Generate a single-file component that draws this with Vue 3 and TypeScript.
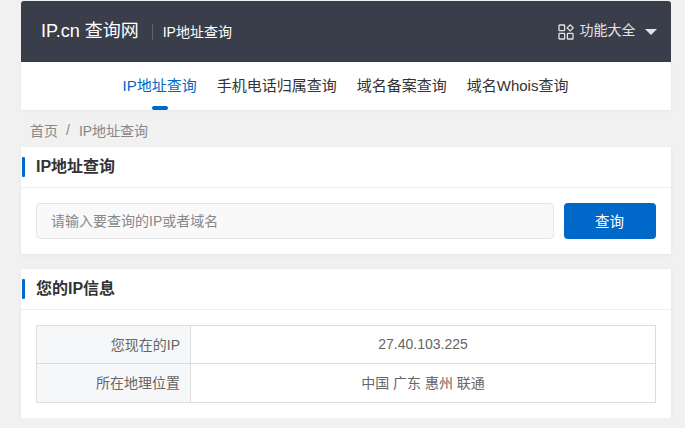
<script setup lang="ts">
const navItems = ['IP地址查询', '手机电话归属查询', '域名备案查询', '域名Whois查询']
const rows = [
  { label: '您现在的IP', value: '27.40.103.225' },
  { label: '所在地理位置', value: '中国 广东 惠州 联通' },
]
</script>

<template>
  <div class="page">
    <header class="topbar">
      <div class="brand">
        <span class="logo">IP.cn 查询网</span>
        <span class="sub">IP地址查询</span>
      </div>
      <div class="tools">
        <svg class="grid-icon" width="16" height="16" viewBox="0 0 16 16" fill="none" stroke="#e4e4e6" stroke-width="1.3">
          <rect x="1" y="1" width="5.6" height="5.6" rx="0.6" />
          <rect x="9.4" y="9.4" width="5.6" height="5.6" rx="0.6" />
          <rect x="1" y="9.4" width="5.6" height="5.6" rx="0.6" />
          <path d="M12.2 0.9l3 3-3 3-3-3z" />
        </svg>
        <span class="tools-text">功能大全</span>
        <span class="caret"></span>
      </div>
    </header>

    <nav class="nav">
      <a v-for="(item, i) in navItems" :key="item" class="nav-item" :class="{ active: i === 0 }">{{ item }}</a>
    </nav>

    <div class="crumbs">
      <span>首页</span>
      <span class="sep">/</span>
      <span>IP地址查询</span>
    </div>

    <section class="card search-card">
      <h2 class="card-title">IP地址查询</h2>
      <div class="search-row">
        <input class="search-input" type="text" placeholder="请输入要查询的IP或者域名" />
        <button class="search-btn" type="button">查询</button>
      </div>
    </section>

    <section class="card info-card">
      <h2 class="card-title">您的IP信息</h2>
      <div class="table-wrap">
        <table class="info-table">
          <tbody>
            <tr v-for="row in rows" :key="row.label">
              <th>{{ row.label }}</th>
              <td>{{ row.value }}</td>
            </tr>
          </tbody>
        </table>
      </div>
    </section>
  </div>
</template>

<style>
html, body {
  margin: 0;
  background: #f1f1f1;
}
</style>

<style scoped>
.page {
  box-sizing: border-box;
  width: 650px;
  margin-left: 21px;
  padding-top: 1px;
  font-family: "Liberation Sans", "Noto Sans CJK SC", sans-serif;
  color: #333;
}
.topbar {
  height: 61px;
  background: #3a3d4a;
  border-radius: 3px 3px 0 0;
  display: flex;
  align-items: center;
  justify-content: space-between;
  padding: 0 14px 0 20px;
  color: #fff;
}
.brand {
  display: flex;
  align-items: center;
}
.logo {
  font-size: 18px;
  line-height: 22px;
  padding-bottom: 2px;
}
.sub {
  font-size: 14px;
  margin-left: 13px;
  padding-left: 10px;
  border-left: 1px solid #5f626d;
  line-height: 16px;
}
.tools {
  display: flex;
  align-items: center;
  color: #e4e4e6;
  font-size: 14px;
}
.tools-text {
  margin-left: 5.5px;
  line-height: 18px;
  padding-bottom: 3px;
}
.caret {
  margin-left: 9.5px;
  width: 0;
  height: 0;
  border-left: 6px solid transparent;
  border-right: 6px solid transparent;
  border-top: 6px solid #e4e4e6;
}
.nav {
  height: 48px;
  box-sizing: border-box;
  padding-right: 1px;
  background: #fff;
  display: flex;
  justify-content: center;
  gap: 20px;
  box-shadow: 0 1px 3px rgba(0, 0, 0, 0.04);
}
.nav-item {
  position: relative;
  font-size: 15px;
  line-height: 47px;
  color: #333;
}
.nav-item.active {
  color: #0068c9;
}
.nav-item.active::after {
  content: "";
  position: absolute;
  left: 50%;
  bottom: 0;
  width: 16px;
  height: 4px;
  margin-left: -8px;
  border-radius: 2px;
  background: #0068c9;
}
.crumbs {
  height: 37px;
  display: flex;
  align-items: center;
  padding: 2px 0 0 9px;
  box-sizing: border-box;
  font-size: 14px;
  color: #888;
}
.sep {
  margin: 0 9px 0 8px;
}
.card {
  background: #fff;
  box-shadow: 0 1px 4px rgba(0, 0, 0, 0.05);
}
.search-card {
  height: 107px;
  margin-bottom: 15px;
}
.info-card {
  height: 149px;
}
.card-title {
  position: relative;
  margin: 0;
  height: 41px;
  box-sizing: border-box;
  border-bottom: 1px solid #eee;
  padding-left: 15px;
  font-size: 16px;
  line-height: 39px;
  font-weight: 700;
  color: #333;
}
.card-title::before {
  content: "";
  position: absolute;
  left: 1px;
  top: 10px;
  width: 3px;
  height: 20px;
  border-radius: 1px;
  background: #0068c9;
}
.search-row {
  display: flex;
  gap: 10px;
  padding: 15px 15px 0;
}
.search-input {
  flex: 1;
  min-width: 0;
  box-sizing: border-box;
  height: 36px;
  padding: 0 14px;
  border: 1px solid #e6e6e6;
  border-radius: 4px;
  background: #f9f9f9;
  font: inherit;
  font-size: 14px;
  outline: none;
}
.search-input::placeholder {
  color: #888;
  opacity: 1;
}
.search-btn {
  width: 92px;
  height: 36px;
  padding: 0 1px 2px 0;
  border: 0;
  border-radius: 4px;
  background: #0068c9;
  color: #fff;
  font: inherit;
  font-size: 14.5px;
}
.table-wrap {
  padding: 15px 15px 0;
}
.info-table {
  width: 100%;
  border-collapse: collapse;
  font-size: 14px;
  color: #666;
}
.info-table th,
.info-table td {
  height: 38px;
  padding: 0 0 1px;
  box-sizing: border-box;
  border: 1px solid #dcdcdc;
}
.info-table tr + tr th,
.info-table tr + tr td {
  height: 39px;
  padding-bottom: 2px;
}
.info-table th {
  width: 154px;
  padding-right: 10px;
  background: #f6f7f9;
  text-align: right;
  font-weight: 400;
}
.info-table td {
  text-align: center;
}
</style>
